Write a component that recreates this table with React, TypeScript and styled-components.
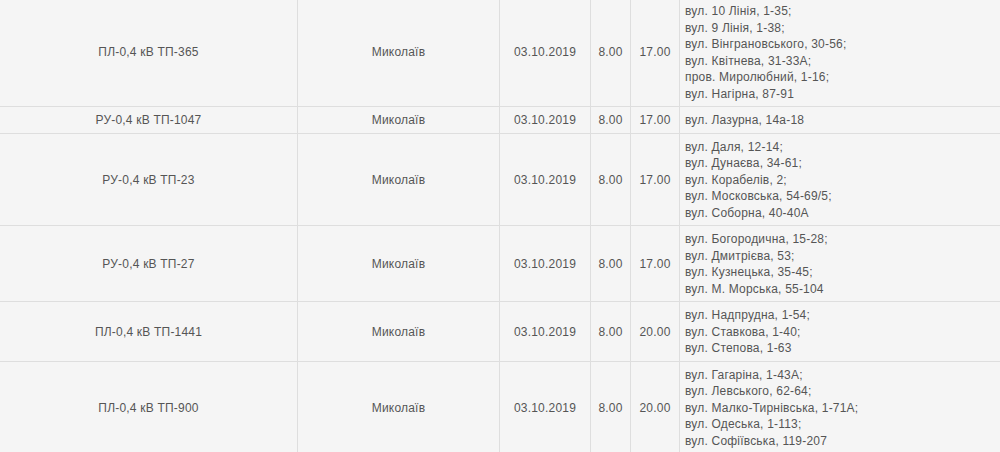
import React from "react";
import styled, { createGlobalStyle } from "styled-components";

const GlobalStyle = createGlobalStyle`
  html, body {
    margin: 0;
    padding: 0;
    background: #f5f5f5;
    overflow: hidden;
  }
  body {
    font-family: "Liberation Sans", Arial, sans-serif;
  }
`;

const Page = styled.div`
  width: 1000px;
  height: 452px;
  overflow: hidden;
  background: #f5f5f5;
`;

const Table = styled.table`
  width: 1000px;
  margin-top: -3px;
  border-collapse: separate;
  border-spacing: 0;
  table-layout: fixed;
  font-family: "Liberation Sans", Arial, sans-serif;
  font-size: 12px;
  line-height: 16.5px;
  letter-spacing: 0.2px;
  color: #555555;
`;

const Row = styled.tr``;

const Cell = styled.td<{ $align?: "left" | "center" }>`
  box-sizing: border-box;
  padding: 5px 4px 4px 4px;
  border-top: 1px solid #dedede;
  border-left: 1px solid #dedede;
  text-align: ${(p) => p.$align ?? "center"};
  vertical-align: middle;
  white-space: nowrap;
  &:first-child {
    border-left: none;
  }
`;

const AddressCell = styled(Cell)`
  padding-left: 5px;
`;

const AddressLine = styled.div``;

type Item = {
  line: string;
  city: string;
  date: string;
  from: string;
  to: string;
  streets: string[];
};

const rows: Item[] = [
  {
    line: "ПЛ-0,4 кВ ТП-365",
    city: "Миколаїв",
    date: "03.10.2019",
    from: "8.00",
    to: "17.00",
    streets: [
      "вул. 10 Лінія, 1-35;",
      "вул. 9 Лінія, 1-38;",
      "вул. Вінграновського, 30-56;",
      "вул. Квітнева, 31-33А;",
      "пров. Миролюбний, 1-16;",
      "вул. Нагірна, 87-91",
    ],
  },
  {
    line: "РУ-0,4 кВ ТП-1047",
    city: "Миколаїв",
    date: "03.10.2019",
    from: "8.00",
    to: "17.00",
    streets: ["вул. Лазурна, 14а-18"],
  },
  {
    line: "РУ-0,4 кВ ТП-23",
    city: "Миколаїв",
    date: "03.10.2019",
    from: "8.00",
    to: "17.00",
    streets: [
      "вул. Даля, 12-14;",
      "вул. Дунаєва, 34-61;",
      "вул. Корабелів, 2;",
      "вул. Московська, 54-69/5;",
      "вул. Соборна, 40-40А",
    ],
  },
  {
    line: "РУ-0,4 кВ ТП-27",
    city: "Миколаїв",
    date: "03.10.2019",
    from: "8.00",
    to: "17.00",
    streets: [
      "вул. Богородична, 15-28;",
      "вул. Дмитрієва, 53;",
      "вул. Кузнецька, 35-45;",
      "вул. М. Морська, 55-104",
    ],
  },
  {
    line: "ПЛ-0,4 кВ ТП-1441",
    city: "Миколаїв",
    date: "03.10.2019",
    from: "8.00",
    to: "20.00",
    streets: ["вул. Надпрудна, 1-54;", "вул. Ставкова, 1-40;", "вул. Степова, 1-63"],
  },
  {
    line: "ПЛ-0,4 кВ ТП-900",
    city: "Миколаїв",
    date: "03.10.2019",
    from: "8.00",
    to: "20.00",
    streets: [
      "вул. Гагаріна, 1-43А;",
      "вул. Левського, 62-64;",
      "вул. Малко-Тирнівська, 1-71А;",
      "вул. Одеська, 1-113;",
      "вул. Софіївська, 119-207",
    ],
  },
];

const colWidths = [297, 202, 91, 40, 49, 321];

export default function App() {
  return (
    <Page>
      <GlobalStyle />
      <Table>
        <colgroup>
          {colWidths.map((w, i) => (
            <col key={i} style={{ width: w }} />
          ))}
        </colgroup>
        <tbody>
          {rows.map((r, i) => (
            <Row key={i}>
              <Cell>{r.line}</Cell>
              <Cell>{r.city}</Cell>
              <Cell>{r.date}</Cell>
              <Cell>{r.from}</Cell>
              <Cell>{r.to}</Cell>
              <AddressCell $align="left">
                {r.streets.map((s, j) => (
                  <AddressLine key={j}>{s}</AddressLine>
                ))}
              </AddressCell>
            </Row>
          ))}
        </tbody>
      </Table>
    </Page>
  );
}
